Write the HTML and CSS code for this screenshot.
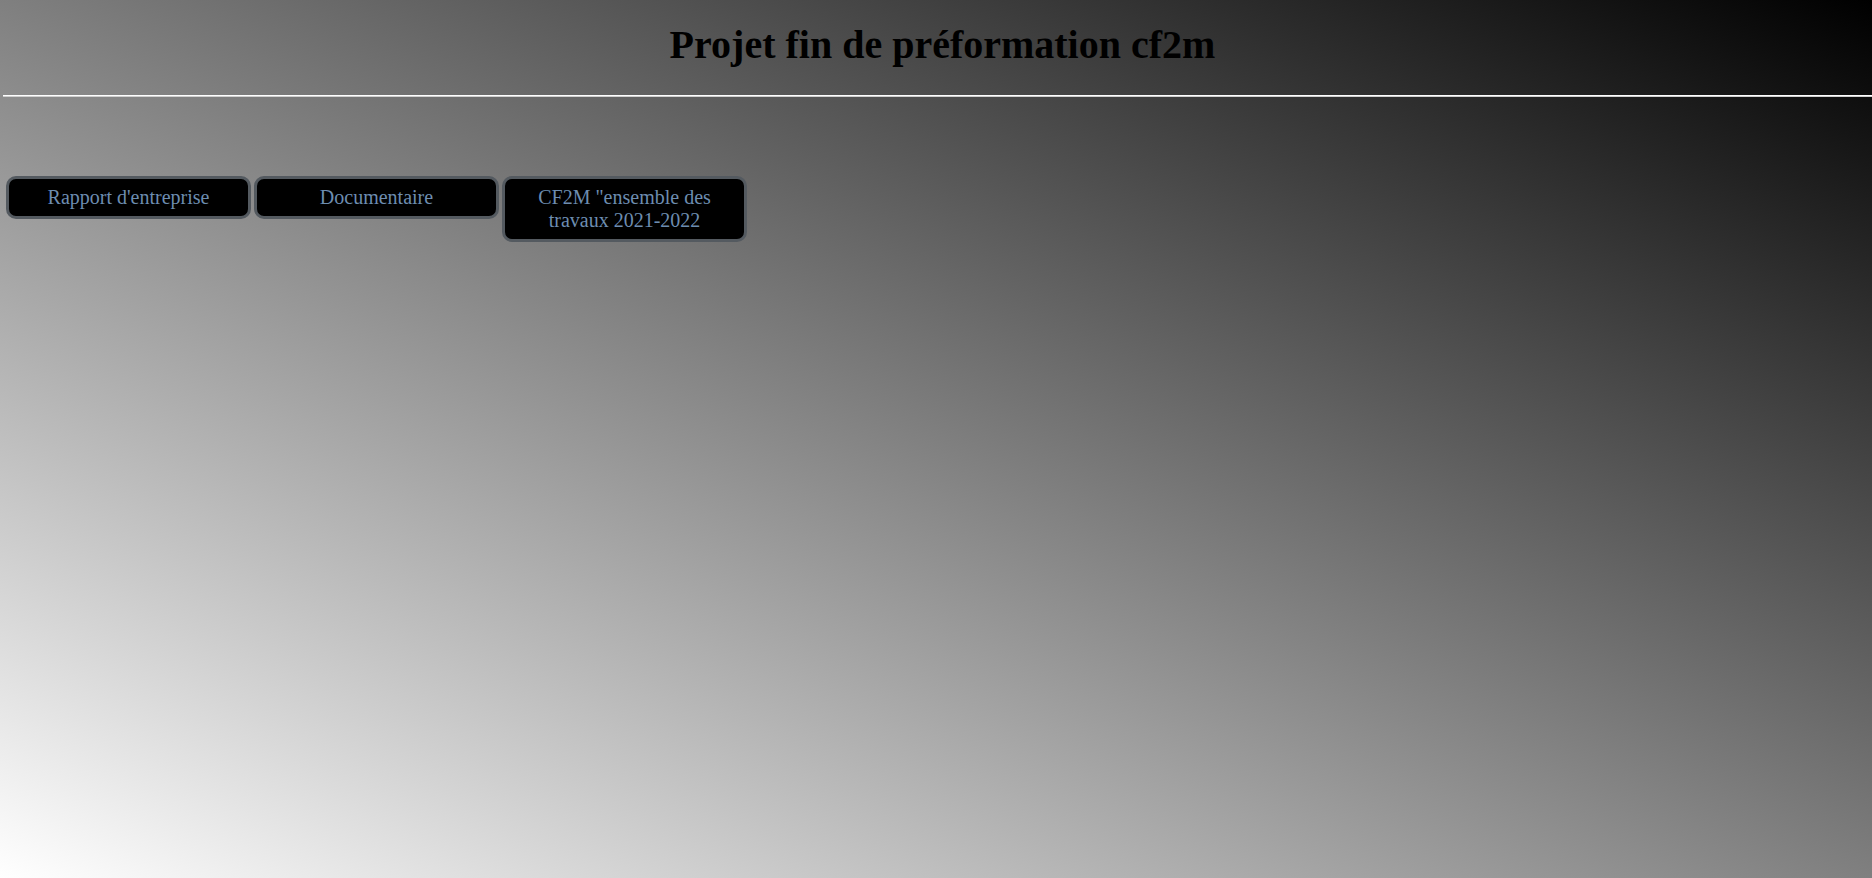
FILE: index.html
```html
<!DOCTYPE html>
<html lang="fr">
<head>
<meta charset="utf-8">
<title>Projet fin de préformation cf2m</title>
<link rel="stylesheet" href="styles.css">
</head>
<body>
<header class="header">
  <h1 class="title">Projet fin de préformation cf2m</h1>
  <hr class="rule">
</header>
<nav class="menu">
  <a class="btn" href="#">Rapport d'entreprise</a>
  <a class="btn" href="#">Documentaire</a>
  <a class="btn" href="#">CF2M "ensemble des travaux 2021-2022</a>
</nav>
</body>
</html>
```
FILE: styles.css
```css
html {
  height: 100%;
}
body {
  margin: 0;
  min-height: 100vh;
  background: linear-gradient(to top right, #ffffff, #000000);
  font-family: "Liberation Serif", "Times New Roman", serif;
  overflow: hidden;
}
.header {
  padding-top: 22px;
}
.title {
  margin: 0 0 27px 0;
  padding-left: 13px;
  text-align: center;
  font-size: 40px;
  line-height: 46px;
  font-weight: bold;
  color: #000;
}
.rule {
  margin: 0 0 0 3px;
  height: 0;
  border: 0;
  border-top: 1px solid #ffffff;
  border-bottom: 1px solid #d0d0d0;
}
.menu {
  display: flex;
  align-items: flex-start;
  gap: 3px;
  margin: 79px 0 0 6px;
}
.btn {
  box-sizing: border-box;
  width: 245px;
  padding: 7px 10px;
  background: #000;
  border: 3px solid #545a60;
  border-radius: 10px;
  color: #6d8db0;
  font-size: 20px;
  line-height: 23px;
  text-align: center;
  text-decoration: none;
}
```
